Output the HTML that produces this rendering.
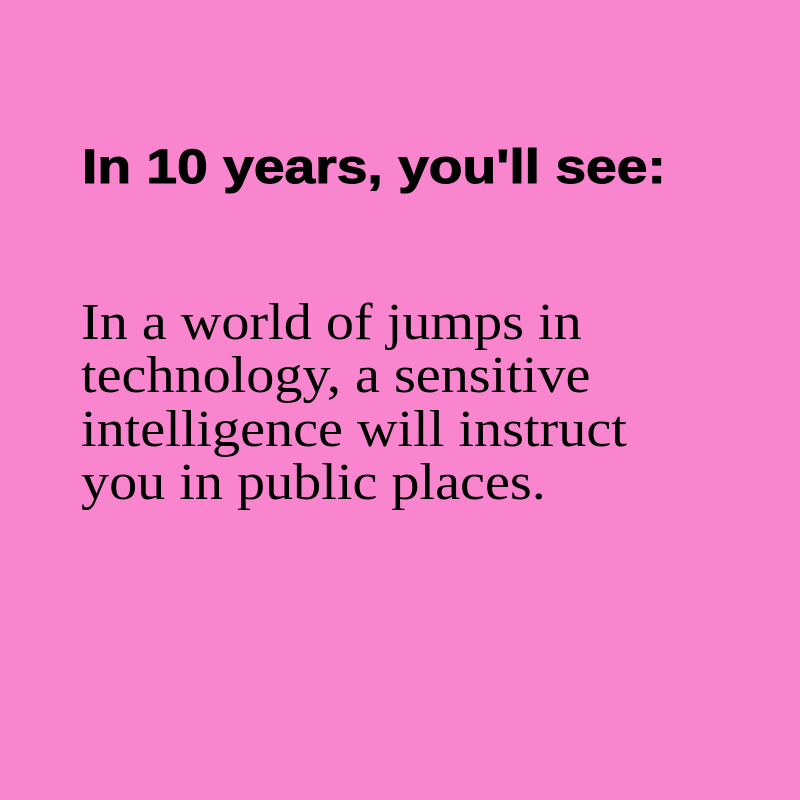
<!DOCTYPE html>
<html><head><style>
html,body{margin:0;padding:0;}
body{width:800px;height:800px;background:#f985cf;position:relative;overflow:hidden;}
.h{position:absolute;left:82px;top:144px;font:bold 48px/48px "Liberation Sans",sans-serif;color:#000;white-space:nowrap;transform:scaleX(1.15);transform-origin:0 0;-webkit-text-stroke:1px #000;}
.b{position:absolute;left:81px;top:296px;font:52px/53.3px "Liberation Serif",serif;color:#000;white-space:nowrap;transform:scaleX(1.08);transform-origin:0 0;}
</style></head><body>
<div class="h">In 10 years, you'll see:</div>
<div class="b">In a world of jumps in<br>technology, a sensitive<br>intelligence will instruct<br>you in public places.</div>
</body></html>
